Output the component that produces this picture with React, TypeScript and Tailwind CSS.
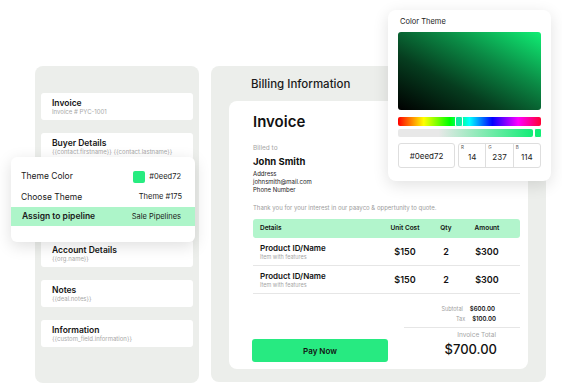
import React from 'react';

const fields = [
  { title: 'Invoice', sub: 'Invoice # PYC-1001' },
  { title: 'Buyer Details', sub: '{{contact.firstname}} {{contact.lastname}}' },
  { title: '', sub: '', tall: true },
  { title: 'Account Details', sub: '{{org.name}}' },
  { title: 'Notes', sub: '{{deal.notes}}' },
  { title: 'Information', sub: '{{custom_field.information}}' },
];

const items = [
  { name: 'Product ID/Name', desc: 'Item with features', cost: '$150', qty: '2', amount: '$300' },
  { name: 'Product ID/Name', desc: 'Item with features', cost: '$150', qty: '2', amount: '$300' },
];

const FieldCard: React.FC<{ title: string; sub: string; tall?: boolean }> = ({ title, sub, tall }) => (
  <div className={`${tall ? 'h-[54px]' : 'h-[27px]'} rounded-[3px] bg-white pl-[11px] pt-[5px]`}>
    {title && <p className="text-[8.5px] leading-[10px] font-semibold text-[#151515]">{title}</p>}
    {sub && <p className="text-[6px] leading-[8px] text-[#a8a8a8]">{sub}</p>}
  </div>
);

const LeftPanel: React.FC = () => (
  <div className="w-[164px] h-[317px] rounded-[8px] bg-[#eceeeb] px-[6px] pt-[27px] flex flex-col gap-[13px]">
    {fields.map((f, i) => (
      <FieldCard key={i} title={f.title} sub={f.sub} tall={f.tall} />
    ))}
  </div>
);

const InvoiceCard: React.FC = () => (
  <div className="ml-[18px] mt-[9px] w-[299px] h-[268px] rounded-[8px] bg-white pl-[24px] pr-[8px] pt-[11px]">
    <h2 className="text-[15px] leading-[20px] font-semibold text-[#111]">Invoice</h2>
    <p className="mt-[12px] text-[6.5px] leading-[8px] text-[#a5a5a5]">Billed to</p>
    <p className="mt-[3px] text-[9.5px] leading-[14px] font-bold text-[#111]">John Smith</p>
    <div className="mt-[1px] text-[6px] leading-[8px] text-[#222]">
      <p>Address</p>
      <p>johnsmith@mail.com</p>
      <p>Phone Number</p>
    </div>
    <p className="mt-[10px] text-[6px] leading-[8px] text-[#9c9c9c]">
      Thank you for your interest in our paayco &amp; oppertunity to quote.
    </p>

    <div className="mt-[7px]">
      <div className="h-[19px] rounded-[3px] bg-[#b2f5cc] pl-[7px] grid grid-cols-[124px_42px_40px_42px_1fr] items-center text-[6.5px] font-semibold text-[#111]">
        <span>Details</span>
        <span className="text-center">Unit Cost</span>
        <span className="text-center">Qty</span>
        <span className="text-center">Amount</span>
        <span />
      </div>
      {items.map((it, i) => (
        <div key={i} className="h-[28px] border-b border-[#e6e6e6] pl-[7px] grid grid-cols-[124px_42px_40px_42px_1fr] items-center">
          <div>
            <p className="text-[8px] leading-[10px] font-semibold text-[#111]">{it.name}</p>
            <p className="text-[5.5px] leading-[8px] text-[#a5a5a5]">{it.desc}</p>
          </div>
          <span className="text-center text-[9px] font-semibold">{it.cost}</span>
          <span className="text-center text-[9px] font-semibold">{it.qty}</span>
          <span className="text-center text-[9px] font-semibold">{it.amount}</span>
          <span />
        </div>
      ))}
    </div>

    <div className="mt-[11px] flex justify-between">
      <button className="mt-[34px] ml-[-1px] w-[136px] h-[23px] rounded-[3px] bg-[#27ea81] text-[8px] font-semibold text-[#111] flex items-center justify-center">
        Pay Now
      </button>
      <div className="w-[116px]">
        <div className="flex justify-end items-center gap-[7px] pr-[25px] leading-[8px]">
          <span className="text-[5.5px] text-[#9d9d9d]">Subtotal</span>
          <span className="text-[6px] font-semibold">$600.00</span>
        </div>
        <div className="mt-[2px] flex justify-end items-center gap-[7px] pr-[24px] leading-[8px]">
          <span className="text-[5.5px] text-[#9d9d9d]">Tax</span>
          <span className="text-[6px] font-semibold">$100.00</span>
        </div>
        <div className="mt-[4px] border-t border-[#e6e6e6]" />
        <p className="mt-[3px] pr-[24px] text-right text-[6.5px] leading-[8px] text-[#a5a5a5]">Invoice Total</p>
        <p className="mt-[2px] pr-[23px] text-right text-[13px] leading-[16px] font-medium text-[#111]">$700.00</p>
      </div>
    </div>
  </div>
);

const RightPanel: React.FC = () => (
  <div className="w-[335px] h-[316px] rounded-[8px] bg-[#eceeeb] pt-[10px]">
    <p className="pl-[40px] text-[11.5px] leading-[16px] font-medium text-[#1a1a1a]">Billing Information</p>
    <InvoiceCard />
  </div>
);

const ThemePopup: React.FC = () => (
  <div className="absolute left-[11px] top-[157px] w-[184px] rounded-[6px] bg-white shadow-[0_4px_16px_rgba(0,0,0,0.13)] pt-[9px] pb-[16px] text-[8.5px] text-[#1a1a1a]">
    <div className="h-[21px] pl-[10px] pr-[14px] flex items-center justify-between">
      <span>Theme Color</span>
      <span className="flex items-center gap-[4px] text-[7.5px]">
        <span className="w-[12px] h-[12px] rounded-[2px] bg-[#27ec80]" />
        #0eed72
      </span>
    </div>
    <div className="h-[20px] pl-[10px] pr-[13px] flex items-center justify-between">
      <span>Choose Theme</span>
      <span className="text-[7.5px]">Theme #175</span>
    </div>
    <div className="h-[19px] pl-[11px] pr-[14px] bg-[#adf5c9] flex items-center justify-between">
      <span className="font-semibold">Assign to pipeline</span>
      <span className="text-[7.5px]">Sale Pipelines</span>
    </div>
  </div>
);

const ColorPicker: React.FC = () => (
  <div className="absolute left-[388px] top-[10px] w-[163px] rounded-[8px] bg-white shadow-[0_4px_16px_rgba(0,0,0,0.12)] px-[10px] pt-[7px] pb-[13px]">
    <p className="pl-[2px] text-[7.5px] leading-[10px] text-[#222]">Color Theme</p>
    <div className="mt-[5px] h-[78px] rounded-[3px] bg-[linear-gradient(to_bottom_left,#10ee74_0%,#0b8a45_35%,#063d1f_65%,#000_100%)]" />
    <div className="relative mt-[7px] h-[9px] rounded-[2px] bg-[linear-gradient(to_right,#ff0000_0%,#ffff00_18%,#00ff00_36%,#00ffff_50%,#0000ff_66%,#ff00ff_84%,#ff0033_100%)]">
      <span className="absolute left-[57px] top-[-1px] w-[8px] h-[11px] rounded-[2px] border border-white bg-[#10eba2]" />
    </div>
    <div className="relative mt-[3px] mr-[8px] h-[8px] rounded-[2px] bg-[linear-gradient(to_right,#e8e8e8_30%,#12ed76_100%)]">
      <span className="absolute right-[-9px] top-[-1px] w-[8px] h-[10px] rounded-[2px] border border-white bg-[#12ed76]" />
    </div>
    <div className="mt-[6px] h-[25px] flex gap-[3px]">
      <div className="w-[57px] rounded-[3px] border border-[#dedede] flex items-center justify-center text-[8px] text-[#222]">
        #0eed72
      </div>
      <div className="flex-1 rounded-[3px] border border-[#dedede] flex">
        {[
          ['R', '14'],
          ['G', '237'],
          ['B', '114'],
        ].map(([l, v], i) => (
          <div key={l} className={`relative flex-1 flex items-center justify-center pt-[3px] text-[8px] text-[#222] ${i > 0 ? 'border-l border-[#dedede]' : ''}`}>
            <span className="absolute left-[2px] top-[1px] text-[4.5px] leading-[6px] text-[#555]">{l}</span>
            {v}
          </div>
        ))}
      </div>
    </div>
  </div>
);

export default function App() {
  return (
    <div className="relative w-[562px] h-[386px] overflow-hidden bg-white font-['Inter',sans-serif] text-[#111]">
      <div className="flex gap-[12px] pl-[35px] pt-[66px]">
        <LeftPanel />
        <RightPanel />
      </div>
      <ThemePopup />
      <ColorPicker />
    </div>
  );
}
